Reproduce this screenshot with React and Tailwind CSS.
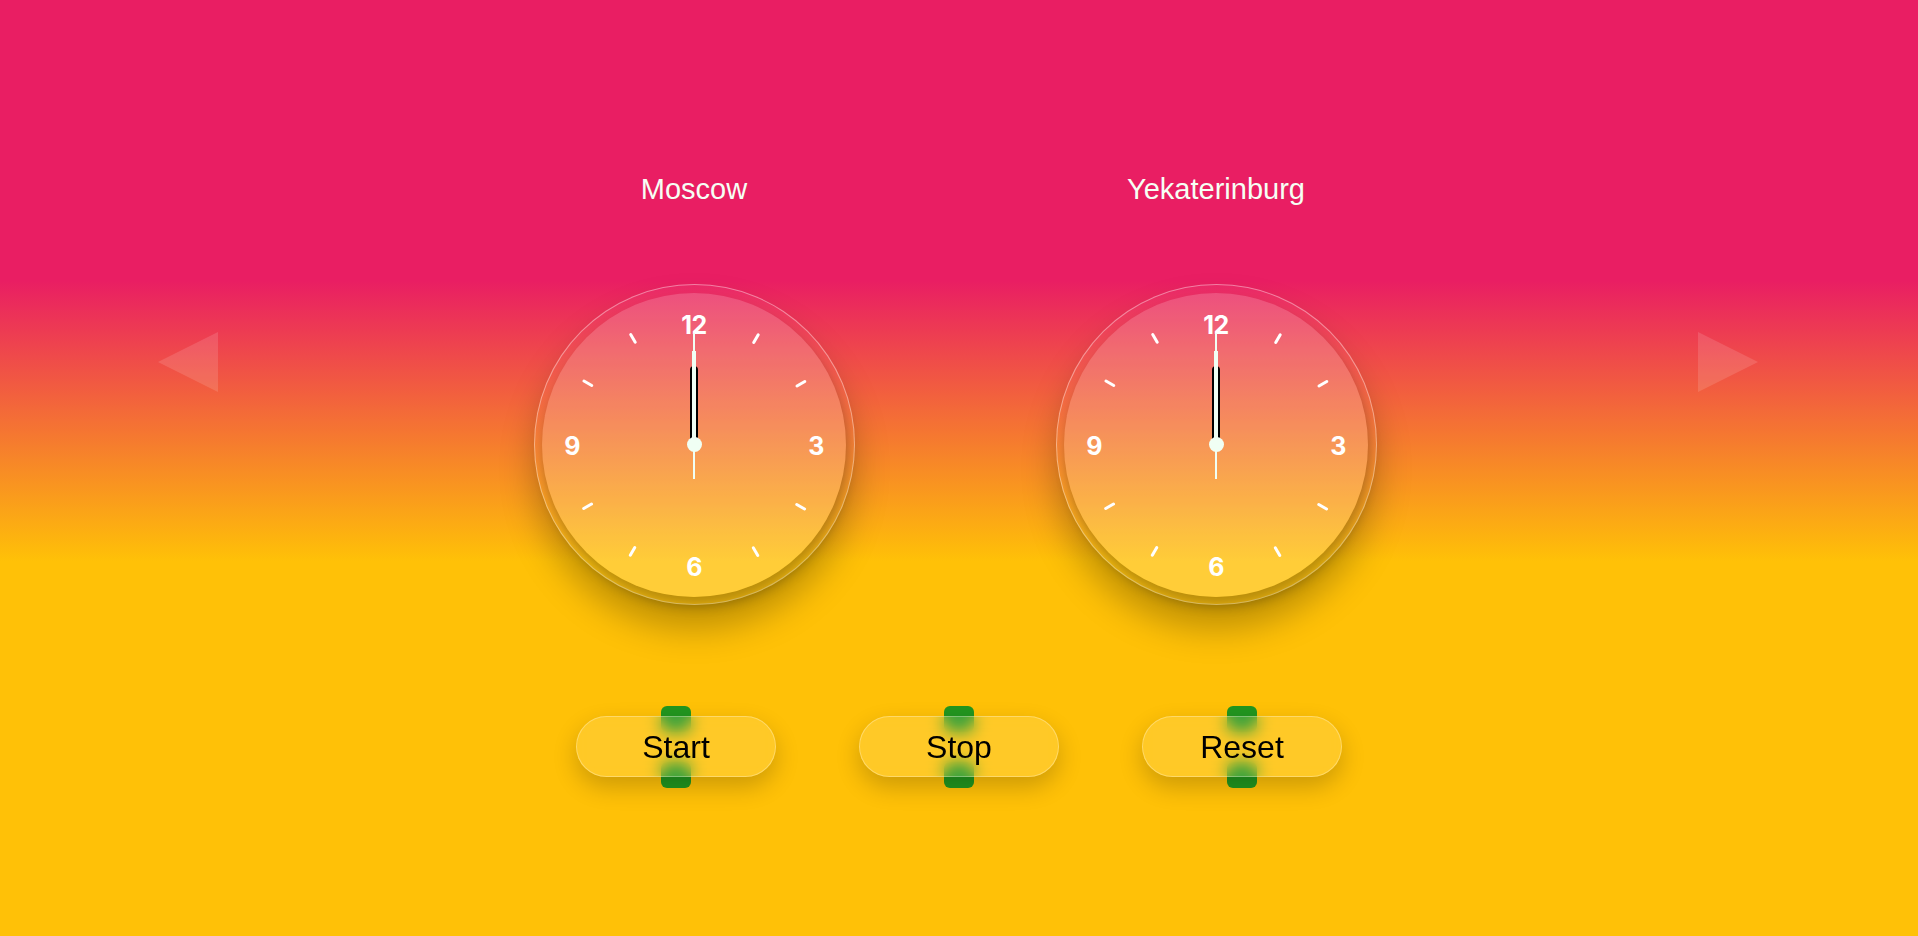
import React from 'react';

const CITIES = ['Moscow', 'Yekaterinburg'];
const TICKS = [1, 2, 4, 5, 7, 8, 10, 11];
const NUMBERS = [
    { n: '12', a: 0 },
    { n: '3', a: 90 },
    { n: '6', a: 180 },
    { n: '9', a: 270 },
];

function ClockFace() {
    return (
        <div className="relative w-[321px] h-[321px] rounded-full border border-white/40 bg-white/[0.04] shadow-[0_24px_34px_rgba(0,0,0,0.25)] flex items-center justify-center">
            <div className="relative w-[304px] h-[304px] rounded-full bg-white/[0.17] shadow-[2px_9px_12px_rgba(0,0,0,0.28)]">
                {/* Hour ticks */}
                {TICKS.map(i => (
                    <span
                        key={i}
                        className="absolute left-1/2 top-1/2 -ml-[1.25px] -mt-[6px] w-[2.5px] h-[12px] rounded-full bg-white"
                        style={{ transform: `rotate(${i * 30}deg) translateY(-123px)` }}
                    />
                ))}
                {/* Numbers */}
                {NUMBERS.map(({ n, a }) => {
                    const rad = (a * Math.PI) / 180;
                    const x = 152 + Math.sin(rad) * 122;
                    const y = 152 - Math.cos(rad) * 121;
                    return (
                        <span
                            key={n}
                            className="absolute -translate-x-1/2 -translate-y-1/2 text-white text-[25px] font-bold leading-none tracking-tight font-['Inter',sans-serif]"
                            style={{ left: x, top: y + 1 }}
                        >
                            {n}
                        </span>
                    );
                })}
                {/* Hands */}
                <span className="absolute left-[148px] top-[73px] w-[8px] h-[79px] bg-black rounded-t-sm" />
                <span className="absolute left-[150px] top-[58px] w-[4px] h-[94px] bg-[#f0fff4]" />
                <span className="absolute left-[151px] top-[40px] w-[2px] h-[146px] bg-[#f0fff4]" />
                <span className="absolute left-[144.5px] top-[144.5px] w-[15px] h-[15px] rounded-full bg-[#f0fff4]" />
            </div>
        </div>
    );
}

function GlassButton({ label }) {
    return (
        <div className="relative w-[200px] h-[61px]">
            <span className="absolute left-1/2 -ml-[15px] -top-[10px] w-[30px] h-[26px] rounded-md bg-[#22961f]" />
            <span className="absolute left-1/2 -ml-[15px] -bottom-[11px] w-[30px] h-[26px] rounded-md bg-[#22961f]" />
            <button className="relative w-full h-full rounded-full border border-white/30 bg-white/[0.13] backdrop-blur-[8px] shadow-[0_10px_24px_rgba(0,0,0,0.2)] text-black text-[32px] leading-none font-['Liberation_Sans',Arial,sans-serif]">
                {label}
            </button>
        </div>
    );
}

export default function App() {
    return (
        <div className="relative w-full h-[936px] overflow-hidden bg-[linear-gradient(to_bottom,#e91e63_30%,#ffc107_60%)] font-['Liberation_Sans',Arial,sans-serif]">
            {/* Carousel arrows */}
            <svg className="absolute left-[158px] top-[332px]" width="60" height="60" viewBox="0 0 60 60">
                <polygon points="60,0 60,60 0,30" fill="rgba(255,255,255,0.13)" />
            </svg>
            <svg className="absolute left-[1698px] top-[332px]" width="60" height="60" viewBox="0 0 60 60">
                <polygon points="0,0 0,60 60,30" fill="rgba(255,255,255,0.13)" />
            </svg>

            {/* Clocks */}
            <div className="flex justify-center gap-[201px] pt-[175px] pr-2">
                {CITIES.map(city => (
                    <div key={city} className="flex flex-col items-center w-[321px]">
                        <h2 className="text-[29px] leading-none text-[#f6fff4]">{city}</h2>
                        <div className="mt-[80px]">
                            <ClockFace />
                        </div>
                    </div>
                ))}
            </div>

            {/* Controls */}
            <div className="flex justify-center gap-[83px] mt-[111px]">
                <GlassButton label="Start" />
                <GlassButton label="Stop" />
                <GlassButton label="Reset" />
            </div>
        </div>
    );
}
